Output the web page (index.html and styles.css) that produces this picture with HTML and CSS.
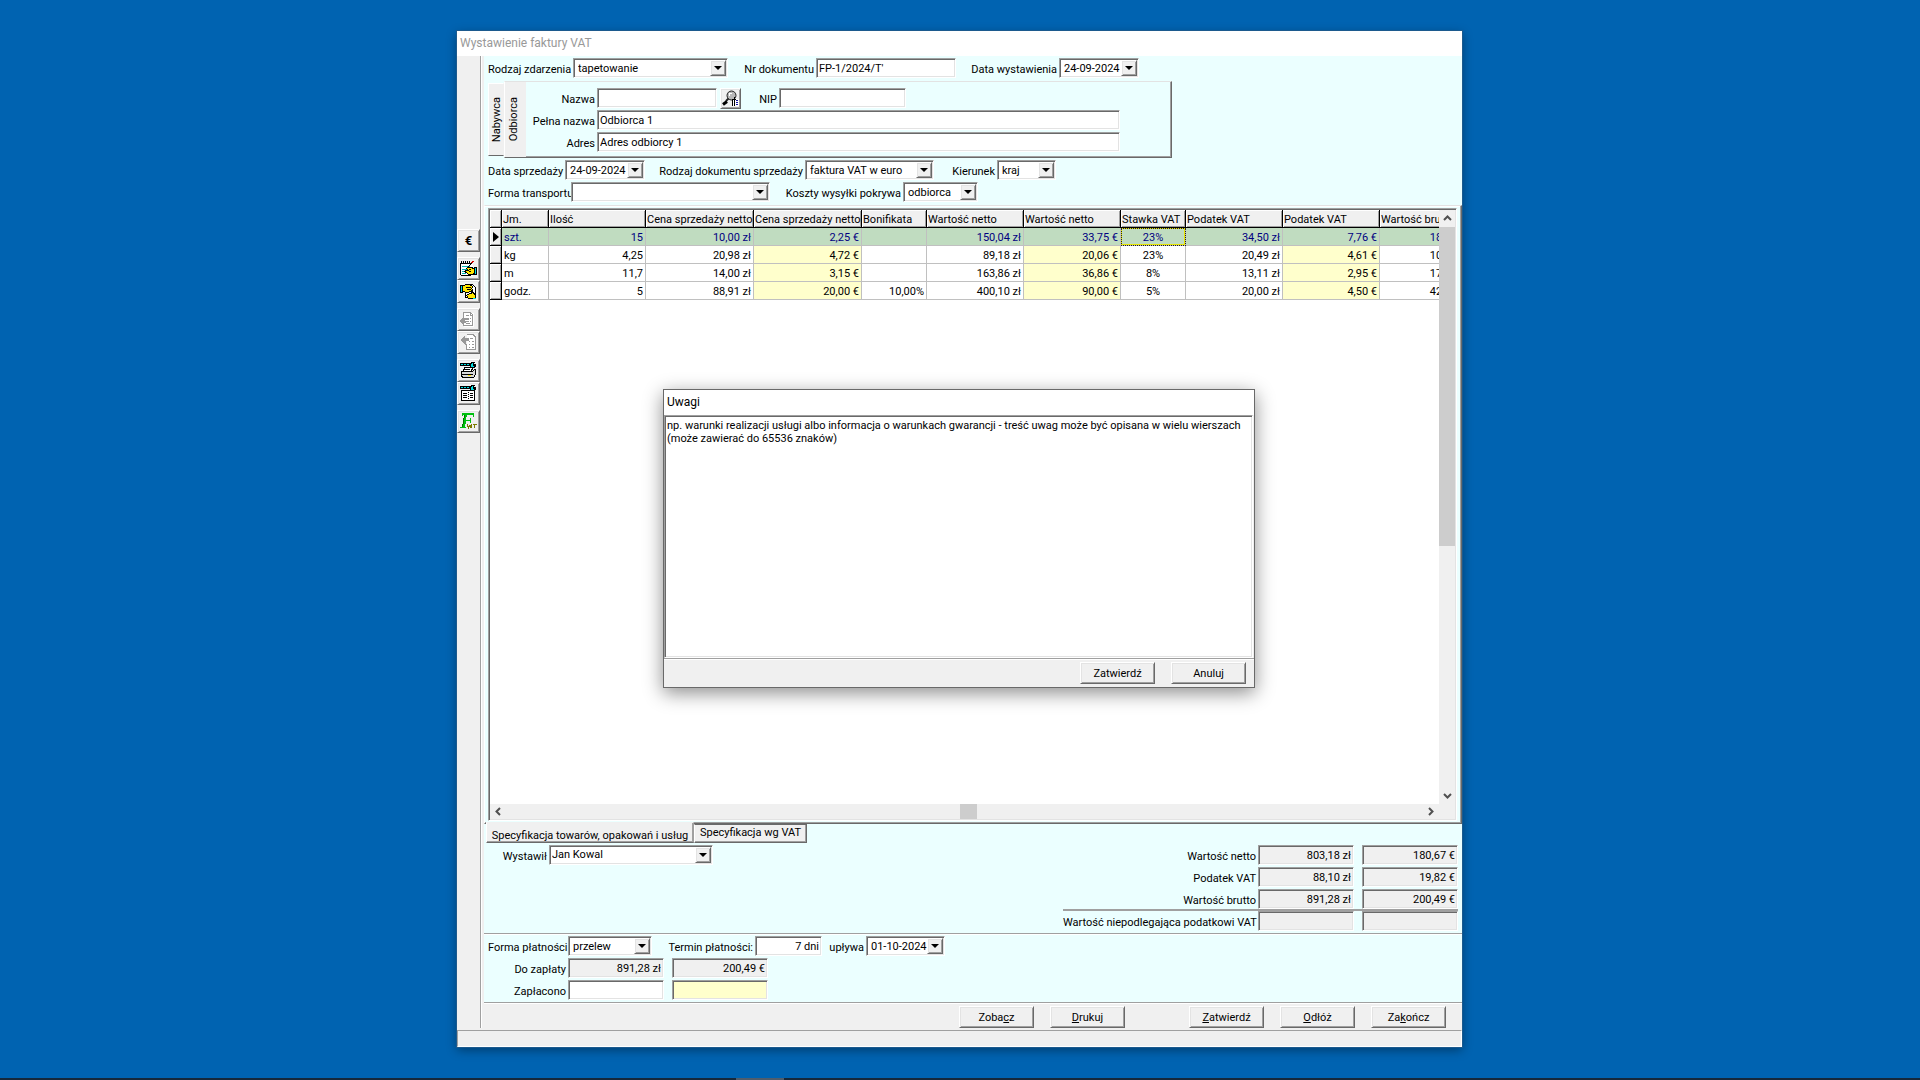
FILE: index.html
```
<!DOCTYPE html>
<html lang="pl">
<head>
<meta charset="utf-8">
<title>Wystawienie faktury VAT</title>
<link rel="stylesheet" href="styles.css">
</head>
<body>
<main class="desktop">
<div class="window">
  <header class="titlebar titlebar-inactive">Wystawienie faktury VAT</header>
  <div class="body">
    <nav class="tools" aria-label="Narzędzia">
      <div class="tool-group">
        <button class="tool tool-euro" type="button" title="Waluta">€</button>
      </div>
      <div class="tool-group">
        <button class="tool" type="button" title="Edytuj">
          <svg viewBox="0 0 17 17"><path fill="#fff" d="M1 4h12v12H1z"/><path stroke="#00b4b4" d="M2 6.500h8M2 9.500h5M2 11.500h4M2 13.500h4"/><path fill="#000" d="M1 1h1v2H1zM3 1h1v2H3zM5 1h1v2H5zM7 1h1v2H7zM9 1h1v2H9zM0 3h12v1H0zM0 4h1v11H0zM1 15h10v1H1z"/><path fill="#ffe600" stroke="#000" d="M7.500 7.500h4l2 1h1v5l-2 1h-4l-2-2-2-1 1-1h3l-2-2z"/><path stroke="#000" d="M9 9.500h2M9 11.500h2"/><path stroke="#000" d="M12.500 2.500L7 8"/><path fill="#d00000" d="M12 1h2v1h-2zM11 2h2v1h-2z"/><path fill="#00dce0" stroke="#000" d="M14.500 7.500h2v7h-2z"/></svg>
        </button>
        <button class="tool" type="button" title="Podgląd">
          <svg viewBox="0 0 17 17"><path fill="#fff" stroke="#000" d="M5.500 1.500h7l3 3v10h-10z"/><path fill="#ffe600" stroke="#000" d="M2.500 3.500l3-2h4l3 2v1l-1 1 1 1-1 2h-2l-1 1h-3l-3-2z"/><path fill="#ffe600" stroke="#000" d="M6.500 12.500l3-2h2l1-2 3 4v3h-7z"/><path stroke="#000" d="M6 4.500h5M7 6.500h4"/><path fill="#00dce0" stroke="#000" d="M.500 2.500h2v7h-2z"/><path fill="#00dce0" d="M13 15h3v1h-3z"/></svg>
        </button>
      </div>
      <div class="tool-group">
        <button class="tool" type="button" title="Wczytaj" disabled>
          <svg viewBox="0 0 17 17"><path fill="#fff" d="M4 2h10v14H4z"/><path fill="none" stroke="#989898" d="M3.500 6V1.500h7l2 2v11h-9V13M10 2v2h2M6 4.500h3M10 7.500h1M10 10.500h1M6 12.500h4"/><path fill="#989898" d="M0 9l4-4v2h5v5H4v2L0 11z"/><path stroke="#fff" d="M5 9.500h4M6 11.500h3"/></svg>
        </button>
        <button class="tool" type="button" title="Cofnij" disabled>
          <svg viewBox="0 0 17 17"><path fill="#fff" d="M7 1h9v15H7z"/><path fill="none" stroke="#989898" d="M7 .500h6l2 2v13H6.500V10M9 7.500h1M12 7.500h2M9 10.500h1M12 10.500h2M9 13.500h1M12 13.500h2M10 4.500h3"/><path fill="#989898" d="M0 6l5-5v3h4v3H6v4H5z"/></svg>
        </button>
      </div>
      <div class="tool-group">
        <button class="tool" type="button" title="Ustawienia wydruku">
          <svg viewBox="0 0 17 17"><path fill="#fff" stroke="#000" d="M4.500 5.500h8l-1 4h-8z"/><path fill="#d8d8d8" stroke="#000" d="M1.500 9.500h11l2-2h1v5l-2 3h-11l-1-2z"/><path stroke="#000" d="M1 12.500h12M5 7.500h5"/><path fill="#ffe600" d="M8 13h3v1H8z"/><path fill="#000" d="M0 1h11v3H0z"/><path stroke="#00dce0" stroke-dasharray="2 1" d="M1 2.500h10"/><path fill="#00dce0" stroke="#000" d="M10.500 1.500l2-1h2l-1 1v2l2-1v2l-2 1h-2l-1-1z"/></svg>
        </button>
        <button class="tool" type="button" title="Ustawienia dokumentu">
          <svg viewBox="0 0 17 17"><path fill="#fff" stroke="#000" d="M1.500 5.500h13v10h-13z"/><path fill="#000" d="M3 8h4v1H3zM3 10h4v1H3zM3 12h4v1H3zM10 8h3v1h-3zM10 10h3v1h-3zM10 12h3v1h-3zM8 7h1v1H8zM8 9h1v1H8zM8 11h1v1H8zM8 13h1v1H8z"/><path fill="#000" d="M0 1h11v3H0z"/><path stroke="#00dce0" stroke-dasharray="2 1" d="M1 2.500h10"/><path fill="#00dce0" stroke="#000" d="M10.500 1.500l2-1h2l-1 1v2l2-1v2l-2 1h-2l-1-1z"/></svg>
        </button>
      </div>
      <div class="tool-group">
        <button class="tool" type="button" title="Faktura VAT">
          <svg viewBox="0 0 17 17"><path fill="#00c010" d="M2 0h12v4h-1V2H7L6 7h4V5h1v5h-1V8H6l-1 6h1v1H0v-1h2l2-12H3v1H2z"/><path fill="#007800" d="M4 2h1L3 14H2z"/><path fill="none" stroke="#7a7a00" d="M7.500 11v2l1 2 1-3M10.500 15v-2l1-1v3M13 11.500h4M14.500 12v3"/></svg>
        </button>
      </div>
    </nav>

    <form class="content">
      <div class="head">
        <div class="row">
          <label class="w85" for="rodzaj">Rodzaj zdarzenia</label>
          <span class="combo w155"><select id="rodzaj"><option>tapetowanie</option></select><span class="arrow"></span></span>
          <label class="w88" for="nr">Nr dokumentu</label>
          <input class="field w140" id="nr" type="text" value="FP-1/2024/T'">
          <label class="w103" for="data-wyst">Data wystawienia</label>
          <span class="combo w80"><select id="data-wyst"><option>24-09-2024</option></select><span class="arrow"></span></span>
        </div>

        <div class="party">
          <button class="vtab vtab-back" type="button"><span>Nabywca</span></button>
          <div class="party-panel">
            <button class="vtab vtab-front" type="button"><span>Odbiorca</span></button>
            <div class="party-form">
              <div class="row">
                <label class="w71" for="nazwa">Nazwa</label>
                <input class="field w120" id="nazwa" type="text">
                <button class="tool lookup" type="button" title="Szukaj">
                  <svg viewBox="0 0 17 17"><path fill="#fff" d="M11 9h6v7h-6z"/><circle cx="9.500" cy="5.500" r="4.500" fill="#b8b8b8" stroke="#222"/><path fill="#fff" d="M7 3h3v1H8v2H7z"/><path stroke="#222" stroke-width="2" d="M6.500 8.500L4 11"/><path stroke="#000" stroke-width="3" d="M1 14.500l4-3"/><path fill="#000" d="M10 9h4v1h-4zM12 7h1v9h-1zM10 10h1v6h-1z"/><path fill="#1414a0" d="M14 10h2v1h-2zM14 12h2v1h-2zM14 14h2v1h-2z"/></svg>
                </button>
                <label class="w38" for="nip">NIP</label>
                <input class="field w127" id="nip" type="text">
              </div>
              <div class="row">
                <label class="w71" for="pelna">Pełna nazwa</label>
                <input class="field w523" id="pelna" type="text" value="Odbiorca 1">
              </div>
              <div class="row">
                <label class="w71" for="adres">Adres</label>
                <input class="field w523" id="adres" type="text" value="Adres odbiorcy 1">
              </div>
            </div>
          </div>
        </div>

        <div class="row">
          <label class="w77" for="data-sprz">Data sprzedaży</label>
          <span class="combo w80"><select id="data-sprz"><option>24-09-2024</option></select><span class="arrow"></span></span>
          <label class="w160" for="rodzaj-dok">Rodzaj dokumentu sprzedaży</label>
          <span class="combo w129"><select id="rodzaj-dok"><option>faktura VAT w euro</option></select><span class="arrow"></span></span>
          <label class="w63" for="kierunek">Kierunek</label>
          <span class="combo w59"><select id="kierunek"><option>kraj</option></select><span class="arrow"></span></span>
        </div>
        <div class="row row-next">
          <label class="w83" for="transport">Forma transportu</label>
          <span class="combo w199"><select id="transport"><option></option></select><span class="arrow"></span></span>
          <label class="w133" for="koszty">Koszty wysyłki pokrywa</label>
          <span class="combo w75"><select id="koszty"><option>odbiorca</option></select><span class="arrow"></span></span>
        </div>
      </div>

      <div class="notebook">
        <div class="grid">
          <div class="grid-main">
            <div class="grid-view">
              <table>
                <colgroup><col class="c12"><col class="c47"><col class="c97"><col class="c108"><col class="c108"><col class="c65"><col class="c97"><col class="c97"><col class="c65"><col class="c97"><col class="c97"><col class="c97"></colgroup>
                <thead>
                  <tr><th></th><th>Jm.</th><th>Ilość</th><th>Cena sprzedaży netto</th><th>Cena sprzedaży netto</th><th>Bonifikata</th><th>Wartość netto</th><th>Wartość netto</th><th>Stawka VAT</th><th>Podatek VAT</th><th>Podatek VAT</th><th>Wartość brutto</th></tr>
                </thead>
                <tbody>
                  <tr class="current"><td class="mark"><span class="pointer"></span></td><td class="unit">szt.</td><td>15</td><td>10,00 zł</td><td class="eur">2,25 €</td><td></td><td>150,04 zł</td><td class="eur">33,75 €</td><td class="rate focus">23%</td><td>34,50 zł</td><td class="eur">7,76 €</td><td>184,54 zł</td></tr>
                  <tr><td class="mark"></td><td class="unit">kg</td><td>4,25</td><td>20,98 zł</td><td class="eur">4,72 €</td><td></td><td>89,18 zł</td><td class="eur">20,06 €</td><td class="rate">23%</td><td>20,49 zł</td><td class="eur">4,61 €</td><td>109,67 zł</td></tr>
                  <tr><td class="mark"></td><td class="unit">m</td><td>11,7</td><td>14,00 zł</td><td class="eur">3,15 €</td><td></td><td>163,86 zł</td><td class="eur">36,86 €</td><td class="rate">8%</td><td>13,11 zł</td><td class="eur">2,95 €</td><td>176,97 zł</td></tr>
                  <tr><td class="mark"></td><td class="unit">godz.</td><td>5</td><td>88,91 zł</td><td class="eur">20,00 €</td><td>10,00%</td><td>400,10 zł</td><td class="eur">90,00 €</td><td class="rate">5%</td><td>20,00 zł</td><td class="eur">4,50 €</td><td>420,10 zł</td></tr>
                </tbody>
              </table>
            </div>
            <div class="vscroll">
              <span class="sb-arrow"><svg viewBox="0 0 9 9"><path d="M1 6l3.500-3.500L8 6"/></svg></span>
              <span class="v-thumb"></span>
              <span class="v-rest"></span>
              <span class="sb-arrow"><svg viewBox="0 0 9 9"><path d="M1 3l3.500 3.500L8 3"/></svg></span>
            </div>
          </div>
          <div class="hscroll">
            <span class="sb-arrow"><svg viewBox="0 0 9 9"><path d="M6 1L2.500 4.500 6 8"/></svg></span>
            <span class="h-before"></span>
            <span class="h-thumb"></span>
            <span class="h-after"></span>
            <span class="sb-arrow"><svg viewBox="0 0 9 9"><path d="M3 1l3.500 3.500L3 8"/></svg></span>
            <span class="corner"></span>
          </div>
        </div>
      </div>
      <div class="tabs">
        <button class="tab tab-active" type="button">Specyfikacja towarów, opakowań i usług</button>
        <button class="tab" type="button">Specyfikacja wg VAT</button>
      </div>

      <div class="summary">
        <div class="row issuer">
          <label class="w65" for="wystawil">Wystawił</label>
          <span class="combo combo-edit w164"><select id="wystawil"><option>Jan Kowal</option></select><span class="arrow"></span></span>
        </div>
        <div class="totals">
          <div class="row">
            <label class="w195" for="t-netto">Wartość netto</label>
            <input class="field num ro w96" id="t-netto" readonly value="803,18 zł">
            <input class="field num ro w96 second" aria-label="Wartość netto w euro" readonly value="180,67 €">
          </div>
          <div class="row row-next">
            <label class="w195" for="t-vat">Podatek VAT</label>
            <input class="field num ro w96" id="t-vat" readonly value="88,10 zł">
            <input class="field num ro w96 second" aria-label="Podatek VAT w euro" readonly value="19,82 €">
          </div>
          <div class="row row-next">
            <label class="w195" for="t-brutto">Wartość brutto</label>
            <input class="field num ro w96" id="t-brutto" readonly value="891,28 zł">
            <input class="field num ro w96 second" aria-label="Wartość brutto w euro" readonly value="200,49 €">
          </div>
          <hr>
          <div class="row">
            <label class="w195" for="t-np">Wartość niepodlegająca podatkowi VAT</label>
            <input class="field num ro w96" id="t-np" readonly>
            <input class="field num ro w96 second" aria-label="Wartość niepodlegająca podatkowi VAT w euro" readonly>
          </div>
        </div>
      </div>

      <div class="payment">
        <div class="row">
          <label class="w80" for="forma">Forma płatności</label>
          <span class="combo w84"><select id="forma"><option>przelew</option></select><span class="arrow"></span></span>
          <label class="w103" for="termin">Termin płatności:</label>
          <input class="field num w67" id="termin" type="text" value="7 dni">
          <label class="w44" for="uplywa">upływa</label>
          <span class="combo w79"><select id="uplywa"><option>01-10-2024</option></select><span class="arrow"></span></span>
        </div>
        <div class="row row-next">
          <label class="w80" for="do-zaplaty">Do zapłaty</label>
          <input class="field num ro w96" id="do-zaplaty" readonly value="891,28 zł">
          <input class="field num ro w96 second" aria-label="Do zapłaty w euro" readonly value="200,49 €">
        </div>
        <div class="row row-next">
          <label class="w80" for="zaplacono">Zapłacono</label>
          <input class="field num w96" id="zaplacono" type="text">
          <input class="field num yellow w96 second" type="text" aria-label="Zapłacono w euro">
        </div>
      </div>

      <div class="actions">
        <button class="btn" type="button">Zoba<u>c</u>z</button>
        <button class="btn" type="button"><u>D</u>rukuj</button>
        <button class="btn btn-apart" type="button"><u>Z</u>atwierdź</button>
        <button class="btn" type="button"><u>O</u>dłóż</button>
        <button class="btn" type="button">Za<u>k</u>ończ</button>
      </div>
    </form>
  </div>
  <footer class="status"></footer>

  <section class="dialog" role="dialog" aria-label="Uwagi">
    <header class="titlebar">Uwagi</header>
    <textarea class="memo" aria-label="Treść uwag">np. warunki realizacji usługi albo informacja o warunkach gwarancji - treść uwag może być opisana w wielu wierszach
(może zawierać do 65536 znaków)</textarea>
    <div class="dialog-actions">
      <button class="btn" type="button">Zatwierdź</button>
      <button class="btn" type="button">Anuluj</button>
    </div>
  </section>
</div>
</main>
<footer class="taskbar"><span></span></footer>
</body>
</html>
```
FILE: styles.css
```
:root {
  --face: #f0f0f0;
  --cyan: #ebffff;
  --yellow: #ffffcc;
  --shadow: #a0a0a0;
  --dark: #696969;
  --light: #e3e3e3;
}
* { box-sizing: border-box; }
body {
  margin: 0;
  min-height: 100vh;
  display: flex;
  flex-direction: column;
  background: #0063b1;
  font: 11px/13px Roboto, "Liberation Sans", sans-serif;
  color: #000;
}
button, input, select, textarea { font: inherit; color: inherit; margin: 0; padding: 0; border-radius: 0; }
label { white-space: nowrap; text-align: right; padding: 2px 2px 0 0; flex: none; }

.desktop { flex: 1; display: flex; padding: 31px 458px 31px 457px; }
.window {
  position: relative;
  flex: 1;
  min-width: 0;
  display: flex;
  flex-direction: column;
  background: var(--face);
  box-shadow: 0 0 0 1px #1c5a8e, 0 3px 10px rgba(0, 0, 0, .4);
}
.titlebar {
  height: 25px;
  padding: 0 3px;
  background: #fff;
  font-size: 12px;
  line-height: 24px;
}
.titlebar-inactive { color: #999; }
.body { flex: 1; display: flex; }

/* left toolbar */
.tools {
  flex: none;
  width: 25px;
  margin-bottom: 2px;
  padding: 173px 2px 0 0;
  border-right: 1px solid #fff;
  box-shadow: inset -1px 0 var(--shadow);
  display: flex;
  flex-direction: column;
  gap: 5px;
}
.tool-group { display: flex; flex-direction: column; }
.tool, .btn, .arrow {
  background: var(--face);
  border: 1px solid;
  border-color: #fff var(--dark) var(--dark) #fff;
  box-shadow: inset 1px 1px var(--light), inset -1px -1px var(--shadow);
}
.tool { width: 23px; height: 23px; display: grid; place-items: center; }
.tool svg { width: 17px; height: 17px; display: block; fill: none; shape-rendering: crispEdges; }
.tool-euro { font-weight: bold; font-size: 13px; }

/* fields */
.content { flex: 1; min-width: 0; padding-left: 2px; display: flex; flex-direction: column; }
.head, .summary, .payment { background: var(--cyan); }
.head { padding: 2px 0 3px 4px; }
.row { display: flex; align-items: center; height: 20px; }
.row-next { margin-top: 2px; }
.field, .combo, .memo, .grid {
  border: 1px solid;
  border-color: var(--shadow) #fff #fff var(--shadow);
  box-shadow: inset 1px 1px var(--dark), inset -1px -1px var(--light);
  background: #fff;
}
.field { flex: none; height: 20px; padding: 2px; outline: 0; }
.num { text-align: right; }
.ro { background: var(--face); }
.yellow { background: var(--yellow); }
.second { margin-left: 8px; }
.combo { flex: none; height: 20px; padding: 1px; display: flex; }
.combo select {
  flex: 1;
  min-width: 0;
  padding: 1px 0 0 3px;
  appearance: none;
  border: 0;
  outline: 0;
  background: transparent;
}
.combo-edit select { padding: 0 0 1px 1px; }
.arrow { flex: none; width: 16px; display: grid; place-items: center; }
.arrow::after { content: ""; border: 4px solid transparent; border-top-color: #000; border-bottom: 0; }

.w38 { width: 38px; } .w44 { width: 44px; } .w59 { width: 59px; } .w63 { width: 63px; }
.w65 { width: 65px; } .w67 { width: 67px; } .w71 { width: 71px; } .w75 { width: 75px; }
.w77 { width: 77px; } .w79 { width: 79px; } .w80 { width: 80px; } .w83 { width: 83px; }
.w84 { width: 84px; } .w85 { width: 85px; } .w88 { width: 88px; } .w96 { width: 96px; }
.w103 { width: 103px; } .w120 { width: 120px; } .w127 { width: 127px; }
.w129 { width: 129px; } .w133 { width: 133px; } .w140 { width: 140px; } .w155 { width: 155px; }
.w160 { width: 160px; } .w164 { width: 164px; } .w195 { width: 195px; } .w199 { width: 199px; }
.w523 { width: 523px; }

/* buyer / recipient */
.party { display: flex; margin: 3px 0 2px; }
.vtab { background: var(--face); border: 0; display: grid; place-items: center; }
.vtab span { writing-mode: vertical-rl; transform: rotate(180deg); }
.vtab-back {
  width: 16px;
  height: 73px;
  margin-top: 2px;
  border: 1px solid;
  border-color: #fff transparent var(--dark) #fff;
}
.party-panel {
  display: flex;
  width: 668px;
  height: 77px;
  border: 1px solid;
  border-color: var(--light) var(--dark) var(--dark) #fff;
  box-shadow: inset -1px -1px var(--shadow);
}
.vtab-front { width: 21px; padding-right: 4px; }
.party-form { padding-top: 6px; display: flex; flex-direction: column; gap: 2px; }
.lookup { width: 21px; height: 21px; margin-left: 3px; }
.lookup svg { shape-rendering: auto; }

/* item grid */
.notebook {
  flex: 1;
  display: flex;
  padding: 2px 4px 2px 3px;
  background: var(--cyan);
  border: 1px solid;
  border-color: var(--light) var(--dark) var(--dark) #fff;
  box-shadow: inset -1px -1px var(--shadow), inset 0 1px #fff;
}
.grid { flex: 1; min-width: 0; padding: 1px; display: flex; flex-direction: column; }
.grid-main { flex: 1; min-width: 0; display: flex; }
.grid-view { flex: 1 1 0; min-width: 0; overflow: hidden; }
table { width: 987px; table-layout: fixed; border-collapse: separate; border-spacing: 0; }
.c12 { width: 12px; } .c47 { width: 47px; } .c65 { width: 65px; } .c97 { width: 97px; } .c108 { width: 108px; }
th, td { height: 18px; padding: 1px 2px 0; white-space: nowrap; line-height: 13px; }
th {
  padding: 1px 0 0 1px;
  text-align: left;
  font-weight: normal;
  background: var(--face);
  border-right: 1px solid #000;
  border-bottom: 1px solid #000;
  box-shadow: inset 1px 1px #fff, inset -1px -1px var(--shadow);
}
td { text-align: right; border-right: 1px solid #c0c0c0; border-bottom: 1px solid #c0c0c0; }
td.unit { text-align: left; }
td.rate { text-align: center; }
td.eur { background: var(--yellow); }
td.mark {
  padding: 0 0 0 3px;
  background: var(--face);
  border-color: #000;
  box-shadow: inset 1px 1px #fff, inset -1px -1px var(--shadow);
}
.pointer { display: block; width: 0; border: 5px solid transparent; border-left: 6px solid #000; border-right: 0; }
.current td:not(.mark) { background: #c0dcc0; color: #000080; }
td.focus { outline: 1px dotted #222; outline-offset: -1px; box-shadow: inset 0 0 0 1px #e6e600; }

.vscroll { flex: none; width: 16px; display: flex; flex-direction: column; background: var(--face); }
.hscroll { flex: none; height: 15px; display: flex; background: var(--face); }
.sb-arrow { flex: none; width: 16px; height: 17px; display: grid; place-items: center; }
.hscroll .sb-arrow { width: 17px; height: 15px; }
.sb-arrow svg { width: 9px; height: 9px; fill: none; stroke: #505050; stroke-width: 2; }
.v-thumb { flex: 319; background: #cdcdcd; }
.v-rest { flex: 241; }
.h-thumb { flex: none; width: 17px; background: #cdcdcd; }
.h-before { flex: 453; }
.h-after { flex: 445; }
.corner { flex: none; width: 16px; }

.tabs { position: relative; display: flex; align-items: flex-start; padding-left: 2px; height: 19px; background: var(--cyan); }
.tab {
  height: 19px;
  width: 113px;
  background: var(--face);
  border: 1px solid;
  border-color: var(--dark) var(--dark) var(--dark) #fff;
  box-shadow: inset -1px -1px var(--shadow);
  padding-bottom: 2px;
  white-space: nowrap;
}
.tab-active { width: 208px; height: 21px; margin-top: -2px; padding: 5px 0 0; border-top-color: var(--face); border-right-color: var(--shadow); }

/* totals */
.summary { display: flex; justify-content: space-between; padding: 2px 4px 2px 0; border-bottom: 1px solid var(--shadow); }
hr { height: 2px; margin: 0; border: 0; background: var(--shadow); }
.payment { border-top: 1px solid #fff; padding: 1px 0 2px 4px; border-bottom: 1px solid var(--shadow); }

.actions { display: flex; justify-content: flex-end; gap: 16px; border-top: 1px solid #fff; padding: 2px 16px 2px 0; }
.btn { width: 75px; height: 22px; text-align: center; }
.btn-apart { margin-left: 48px; }
.status {
  height: 17px;
  border: 1px solid;
  border-color: var(--shadow) #fff #fff var(--shadow);
}

/* notes dialog */
.dialog {
  position: absolute;
  inset: 0 1px 1px 0;
  margin: auto;
  width: 592px;
  height: 299px;
  display: flex;
  flex-direction: column;
  background: var(--face);
  border: 1px solid var(--dark);
  box-shadow: 0 5px 18px rgba(0, 0, 0, .45);
}
.memo { flex: 1; margin-right: 1px; padding: 3px 2px 0; resize: none; outline: 0; overflow: hidden; }
.dialog-actions {
  display: flex;
  justify-content: flex-end;
  gap: 16px;
  padding: 3px 8px 3px 0;
  border-top: 1px solid var(--shadow);
  box-shadow: inset 0 1px #fff;
}

.taskbar { height: 2px; display: flex; background: #16283a; }
.taskbar span { width: 48px; margin-left: 736px; background: #4f5d6c; }

@media (max-width: 1600px) {
  .desktop { padding-left: 16px; padding-right: 16px; }
}
```
